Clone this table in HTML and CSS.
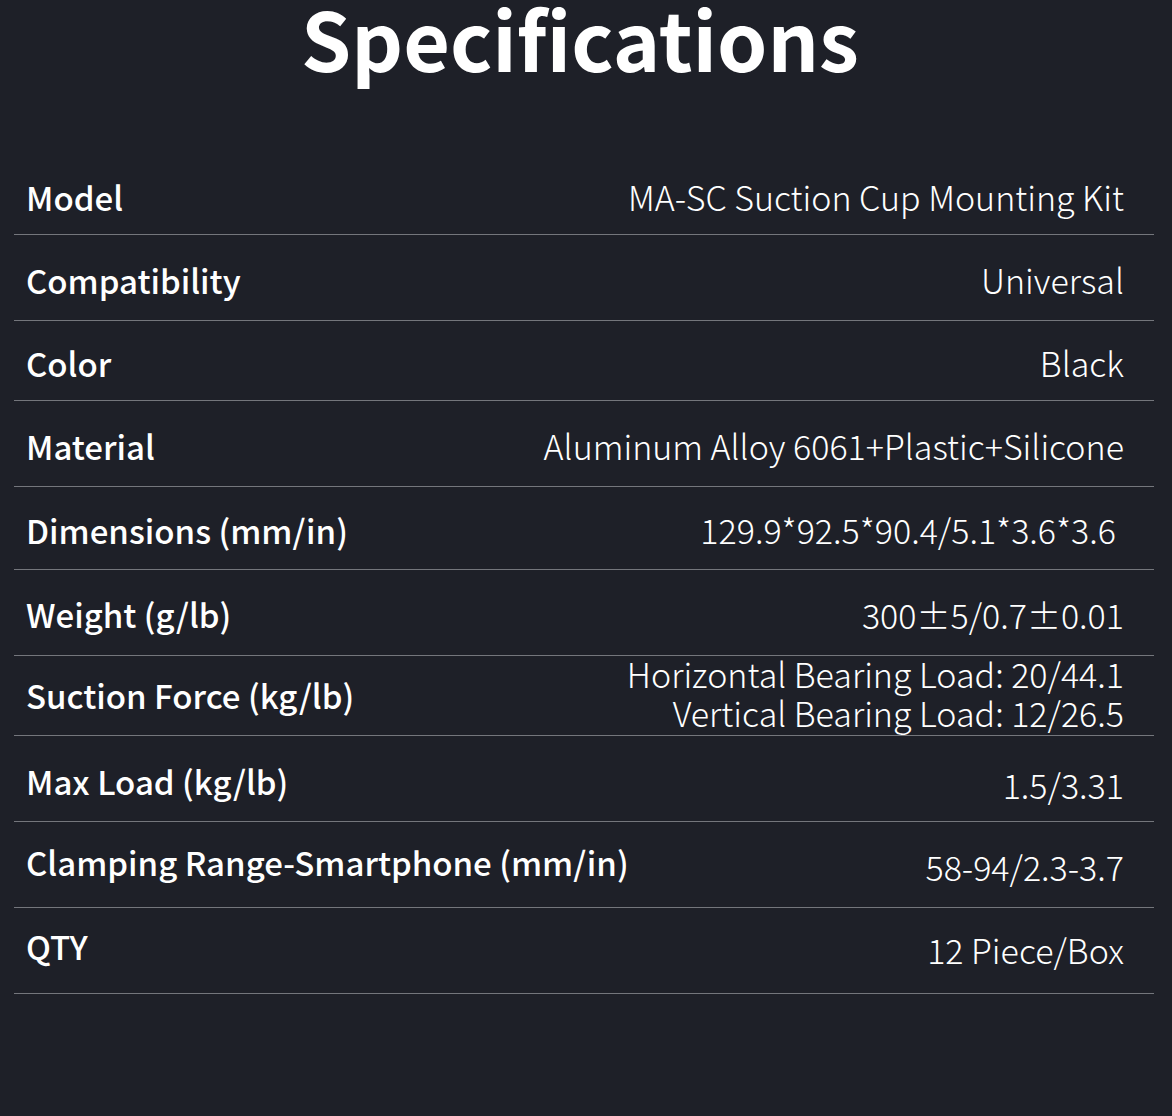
FILE: index.html
```html
<!DOCTYPE html>
<html>
<head>
<meta charset="utf-8">
<link rel="stylesheet" href="styles.css">
</head>
<body>
<main class="page">
  <h1 class="title">Specifications</h1>
  <div class="table">
    <div class="row h82 first"><span class="label">Model</span><span class="value">MA-SC Suction Cup Mounting Kit</span></div>
    <div class="row h86"><span class="label">Compatibility</span><span class="value">Universal</span></div>
    <div class="row h80"><span class="label">Color</span><span class="value">Black</span></div>
    <div class="row h86"><span class="label">Material</span><span class="value">Aluminum Alloy 6061+Plastic+Silicone</span></div>
    <div class="row h83"><span class="label">Dimensions (mm/in)</span><span class="value shift">129.9*92.5*90.4/5.1*3.6*3.6</span></div>
    <div class="row h86"><span class="label up1">Weight (g/lb)</span><span class="value">300±5/0.7±0.01</span></div>
    <div class="row h80"><span class="label up3">Suction Force (kg/lb)</span><span class="value multi">Horizontal Bearing Load: 20/44.1<br>Vertical Bearing Load: 12/26.5</span></div>
    <div class="row h86"><span class="label">Max Load (kg/lb)</span><span class="value down4">1.5/3.31</span></div>
    <div class="row h86"><span class="label up4">Clamping Range-Smartphone (mm/in)</span><span class="value">58-94/2.3-3.7</span></div>
    <div class="row h86"><span class="label up7">QTY</span><span class="value up2">12 Piece/Box</span></div>
  </div>
</main>
</body>
</html>
```
FILE: styles.css
```css
html, body {
  margin: 0;
  padding: 0;
  background: #1e2028;
}
body {
  font-family: "Noto Sans CJK SC", "Noto Sans", sans-serif;
  color: #ffffff;
}
.page {
  width: 1172px;
  height: 1116px;
  overflow: hidden;
}
.title {
  margin: 0;
  height: 153px;
  padding-right: 12px;
  text-align: center;
  font-size: 80.5px;
  font-weight: 700;
  line-height: 74px;
  letter-spacing: 0;
}
.table {
  margin: 0 18px 0 14px;
}
.row {
  display: flex;
  justify-content: space-between;
  align-items: center;
  padding: 4px 30px 0 12px;
  border-bottom: 1px solid #74767c;
  box-sizing: border-box;
}
.row.first {
  padding-top: 6px;
}
.h80 { height: 80px; }
.h82 { height: 82px; }
.h83 { height: 83px; }
.h86 { height: 86px; }
.label {
  font-size: 33px;
  font-weight: 500;
  line-height: 34px;
}
.value {
  font-size: 34px;
  font-weight: 300;
  line-height: 34px;
  text-align: right;
}
.value.multi {
  line-height: 39px;
  padding-bottom: 9px;
}
.value.shift {
  margin-right: 8px;
}
.up1 { padding-bottom: 2px; }
.up2 { padding-bottom: 5px; }
.up3 { padding-bottom: 6px; }
.up4 { padding-bottom: 9px; }
.up7 { padding-bottom: 14px; }
.down4 { padding-top: 8px; }
```
